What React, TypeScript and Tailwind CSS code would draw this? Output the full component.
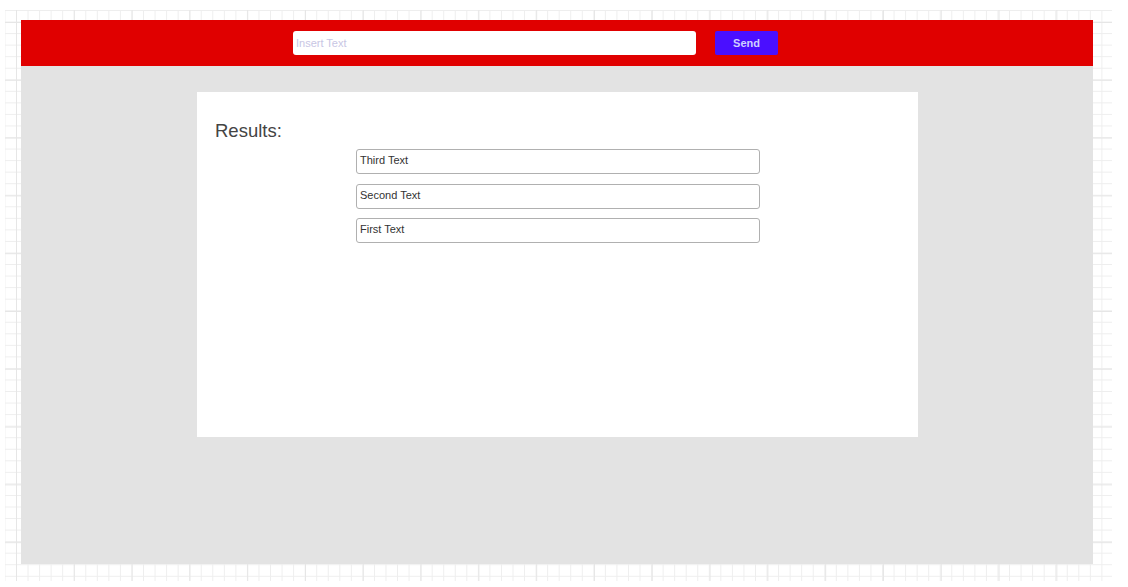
import React from "react";

const items = ["Third Text", "Second Text", "First Text"];

export default function App() {
  return (
    <div className="w-[1128px] h-[587px] bg-white relative overflow-hidden" style={{ fontFamily: '"Liberation Sans", Arial, sans-serif' }}>
      <div className="absolute left-[5px] top-[10px] w-[1107px] h-[571px] bg-[linear-gradient(to_right,#e6e6e6_1px,transparent_1px),linear-gradient(to_bottom,#e6e6e6_1px,transparent_1px),linear-gradient(to_right,#eeeeee_1px,transparent_1px),linear-gradient(to_bottom,#eeeeee_1px,transparent_1px)] bg-[size:57.8px_57.8px,57.8px_57.8px,11.56px_11.56px,11.56px_11.56px] bg-[position:11px_12px,11px_12px,11px_0px,11px_0px]" />
      <div className="relative pl-[21px] pt-[20px]">
        <div className="w-[1072px] h-[544px] flex flex-col bg-[#e3e3e3]">
          <div className="h-[46px] bg-[#e00000] flex items-center pl-[272px] gap-[19px] shrink-0">
            <div className="w-[403px] h-[24px] bg-white rounded-[3px] flex items-center px-[3px]">
              <span className="text-[11px] text-[#c8c6e4]">Insert Text</span>
            </div>
            <button className="w-[63px] h-[24px] bg-[#4a0fff] rounded-[2px] text-[11px] font-bold text-[#cfd0ff] flex items-center justify-center">
              Send
            </button>
          </div>
          <div className="pl-[176px] pt-[26px]">
            <div className="w-[721px] h-[345px] bg-white pt-[28px] pl-[18px]">
              <div className="text-[18.5px] leading-[22px] text-[#444444]">Results:</div>
              <div className="ml-[141px] mt-[7px] flex flex-col gap-[9.5px]">
                {items.map((t) => (
                  <div key={t} className="w-[404px] h-[25px] border-[1.5px] border-[#b0b0b0] rounded-[3px] pl-[3px] pt-[3px] text-[11px] leading-[14px] text-[#333333]">
                    {t}
                  </div>
                ))}
              </div>
            </div>
          </div>
        </div>
      </div>
    </div>
  );
}
